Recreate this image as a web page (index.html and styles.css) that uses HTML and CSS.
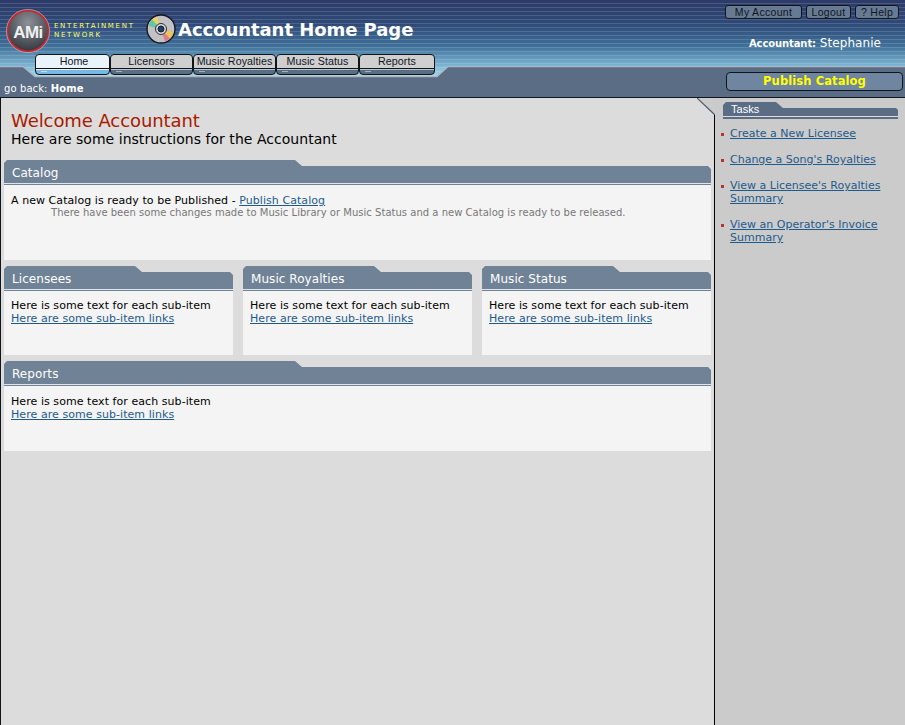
FILE: index.html
```html
<!DOCTYPE html>
<html lang="en">
<head>
    <meta charset="UTF-8">
    <meta name="viewport" content="width=device-width, initial-scale=1.0">
    <title>Accountant Home Page</title>
    <link rel="stylesheet" href="styles.css">
</head>
<body>
    <header class="top">
        <svg class="top-seam" width="905" height="31" viewBox="0 0 905 31">
            <path d="M0 0.5H23L35 10.5H437L448 0.5H905V31H0Z" fill="#5a6d84"/>
            <path d="M0 0.5H23L35 10.5H437L448 0.5H905" fill="none" stroke="#aab6c4" stroke-width="1.5"/>
        </svg>
        <div class="top-row">
            <div class="brand">
                <svg class="logo" width="44" height="44" viewBox="0 0 44 44">
                    <defs>
                        <radialGradient id="ball" cx="0.5" cy="0.3" r="0.75">
                            <stop offset="0" stop-color="#8d9197"/>
                            <stop offset="1" stop-color="#2f3238"/>
                        </radialGradient>
                    </defs>
                    <circle cx="22" cy="22" r="20.5" fill="url(#ball)" stroke="#c8262e" stroke-width="2"/>
                    <circle cx="22" cy="22" r="21.6" fill="none" stroke="#d9e2ea" stroke-width="0.5"/>
                    <text x="22" y="29" class="logo-text" text-anchor="middle">AMi</text>
                </svg>
                <div class="brand-name">ENTERTAINMENT<br>NETWORK</div>
            </div>
            <svg class="disc" width="30" height="30" viewBox="0 0 30 30">
                <circle cx="15" cy="15" r="14" fill="#c2c2c4" stroke="#15181f" stroke-width="1.4"/>
                <path d="M15 15L2.5 12A13 13 0 0 1 11 2.5Z" fill="#e6d36a"/>
                <path d="M15 15L2.5 12A13 13 0 0 1 6 5.5Z" fill="#62c4a8"/>
                <path d="M15 15L27.5 18A13 13 0 0 1 19 27.5Z" fill="#e27a8a"/>
                <path d="M15 15L27.5 18A13 13 0 0 1 24 24.5Z" fill="#e6c75a"/>
                <circle cx="15" cy="15" r="5.5" fill="#d8dade" stroke="#2a2e36" stroke-width="1"/>
                <circle cx="15" cy="15" r="3" fill="#1d3f70" stroke="#15181f" stroke-width="1"/>
            </svg>
            <h1 class="page-title">Accountant Home Page</h1>
            <div class="account">
                <div class="account-links">
                    <a class="mini-btn btn-account" href="#">My Account</a>
                    <a class="mini-btn btn-logout" href="#">Logout</a>
                    <a class="mini-btn btn-help" href="#">? Help</a>
                </div>
                <div class="account-user"><b>Accountant:</b> Stephanie</div>
            </div>
        </div>
        <nav class="tabs">
            <a class="tab tab-on tab-home" href="#">Home</a>
            <a class="tab" href="#">Licensors</a>
            <a class="tab" href="#">Music Royalties</a>
            <a class="tab" href="#">Music Status</a>
            <a class="tab tab-end" href="#">Reports</a>
        </nav>
        <div class="crumbs">
            <div class="go-back">go back: <b>Home</b></div>
            <a class="publish-btn" href="#">Publish Catalog</a>
        </div>
    </header>

    <div class="page">
        <main class="main">
            <h2 class="welcome">Welcome Accountant</h2>
            <p class="intro">Here are some instructions for the Accountant</p>

            <section class="panel">
                <h3 class="panel-head">Catalog</h3>
                <div class="panel-body panel-body-tall">
                    A new Catalog is ready to be Published - <a href="#">Publish Catalog</a>
                    <p class="note">There have been some changes made to Music Library or Music Status and a new Catalog is ready to be released.</p>
                </div>
            </section>

            <div class="panel-row">
                <section class="panel">
                    <h3 class="panel-head panel-head-small">Licensees</h3>
                    <div class="panel-body">Here is some text for each sub-item<br><a href="#">Here are some sub-item links</a></div>
                </section>
                <section class="panel">
                    <h3 class="panel-head panel-head-small">Music Royalties</h3>
                    <div class="panel-body">Here is some text for each sub-item<br><a href="#">Here are some sub-item links</a></div>
                </section>
                <section class="panel">
                    <h3 class="panel-head panel-head-small">Music Status</h3>
                    <div class="panel-body">Here is some text for each sub-item<br><a href="#">Here are some sub-item links</a></div>
                </section>
            </div>

            <section class="panel">
                <h3 class="panel-head">Reports</h3>
                <div class="panel-body panel-body-wide">Here is some text for each sub-item<br><a href="#">Here are some sub-item links</a></div>
            </section>
        </main>

        <aside class="side">
            <svg class="side-corner" width="18" height="18" viewBox="0 0 18 18">
                <path d="M0 0H18V17Z" fill="#cbcbcb"/>
                <path d="M0 0L17.5 16.5" fill="none" stroke="#4a5a6c" stroke-width="1.2"/>
            </svg>
            <h3 class="tasks-head">Tasks</h3>
            <ul class="tasks">
                <li><a href="#">Create a New Licensee</a></li>
                <li><a href="#">Change a Song's Royalties</a></li>
                <li><a href="#">View a Licensee's Royalties Summary</a></li>
                <li><a href="#">View an Operator's Invoice Summary</a></li>
            </ul>
        </aside>
    </div>
</body>
</html>
```

FILE: styles.css
```css
html, body {
    height: 100%;
}
body {
    margin: 0;
    font-family: "DejaVu Sans", Verdana, sans-serif;
    font-size: 11px;
    letter-spacing: 0.06px;
    color: #000;
    display: flex;
    flex-direction: column;
    overflow: hidden;
}
a {
    color: #1f5a8c;
}

/* header */
.top {
    position: relative;
    height: 97px;
    flex: none;
    border-bottom: 1px solid #10151c;
    background:
        repeating-linear-gradient(to bottom, rgba(0, 0, 0, 0) 0 3px, rgba(255, 255, 255, 0.14) 3px 4px),
        linear-gradient(to bottom, #2c3a68 0, #2f4a78 24px, #3f7099 46px, #7fb6d4 66px, #a8dbe2 77px);
}
.top-seam {
    position: absolute;
    left: 0;
    top: 66px;
}
.top-row {
    position: relative;
    height: 54px;
    display: flex;
    align-items: flex-start;
}
.brand {
    display: flex;
    align-items: center;
    padding: 9px 0 0 6px;
}
.logo {
    overflow: visible;
}
.logo-text {
    font-family: "Liberation Sans Narrow", "Liberation Sans", Arial, sans-serif;
    font-size: 17px;
    font-weight: bold;
    letter-spacing: -0.5px;
    fill: #f0f0f0;
}
.brand-name {
    margin: 0 0 0 4px;
    width: 92px;
    font-size: 7px;
    line-height: 9px;
    letter-spacing: 1.7px;
    color: #ffff66;
}
.disc {
    margin: 14px 0 0 0;
}
.page-title {
    margin: 17px 0 0 2px;
    font-size: 18px;
    line-height: 26px;
    font-weight: bold;
    letter-spacing: -0.05px;
    color: #fff;
}
.account {
    margin-left: auto;
    width: 180px;
    padding: 5px 6px 0 0;
}
.account-links {
    display: flex;
    justify-content: flex-end;
    gap: 4px;
}
.mini-btn {
    box-sizing: border-box;
    height: 14px;
    border: 1px solid #10151c;
    border-radius: 3px;
    background: #667a94;
    color: #10151c;
    font-family: "Liberation Sans", Arial, sans-serif;
    font-size: 10.5px;
    line-height: 12px;
    letter-spacing: 0.3px;
    text-align: center;
    text-decoration: none;
}
.btn-account { width: 77px; }
.btn-logout { width: 45px; }
.btn-help { width: 44px; }
.account-user {
    margin: 17px 18px 0 0;
    text-align: right;
    color: #fff;
    font-size: 12px;
    line-height: 14px;
}
.account-user b {
    font-size: 10px;
    letter-spacing: -0.1px;
}

/* tabs */
.tabs {
    position: relative;
    height: 21px;
    margin-left: 35px;
    display: flex;
}
.tab {
    box-sizing: border-box;
    width: 83px;
    height: 21px;
    border: 1px solid #10151c;
    border-radius: 4px;
    background:
        linear-gradient(#9fb0c2, #9fb0c2) 5px 16px / 6px 1px no-repeat,
        linear-gradient(to bottom, #cfcfcf 0 13px, #10151c 13px 14px, #b8c4d0 14px 15px, #5a6d84 15px);
    color: #10151c;
    font-family: "Liberation Sans", Arial, sans-serif;
    font-size: 10.7px;
    line-height: 13px;
    text-align: center;
    text-decoration: none;
}
.tab-on {
    background:
        linear-gradient(#bfe0f4, #bfe0f4) 5px 16px / 6px 1px no-repeat,
        linear-gradient(to bottom, #eaf3fa 0 13px, #10151c 13px 14px, #eaf3fa 14px 15px, #78b8e4 15px);
}
.tab-home {
    width: 75px;
    padding-left: 3px;
}
.tab-end { width: 76px; }

.crumbs {
    position: relative;
    height: 22px;
    display: flex;
    justify-content: space-between;
    align-items: flex-start;
}
.go-back {
    padding: 7px 0 0 4px;
    color: #fff;
    font-size: 10px;
    letter-spacing: 0.1px;
    line-height: 13px;
}
.publish-btn {
    box-sizing: border-box;
    width: 177px;
    height: 19px;
    margin: -3px 2px 0 0;
    border: 1px solid #10151c;
    border-radius: 4px;
    background: #7085a0;
    color: #ffff00;
    font-size: 11.5px;
    font-weight: bold;
    line-height: 17px;
    letter-spacing: 0.1px;
    text-align: center;
    text-decoration: none;
}

/* page */
.page {
    flex: 1;
    display: flex;
    min-height: 0;
    border-left: 1px solid #10151c;
}
.main {
    box-sizing: border-box;
    width: 714px;
    padding: 12px 3px 0 3px;
    flex: none;
    background: #dcdcdc;
    border-right: 1px solid #000;
}
.welcome {
    margin: 0 0 0 7px;
    font-size: 18px;
    line-height: 21px;
    font-weight: normal;
    letter-spacing: -0.08px;
    color: #a81a00;
}
.intro {
    margin: 0 0 12px 7px;
    font-size: 14px;
    line-height: 17px;
    letter-spacing: 0.03px;
}
.panel {
    margin-bottom: 6px;
}
.panel-head {
    box-sizing: border-box;
    margin: 0;
    height: 26px;
    padding: 6px 0 0 8px;
    font-size: 12px;
    line-height: 15px;
    font-weight: normal;
    color: #fff;
    background: linear-gradient(to bottom, #6f8296 0 23px, #dfe5ea 23px 24px, #6f8296 24px 25px, #f4f4f4 25px);
    clip-path: polygon(0 3px, 3px 0, 291px 0, 298px 6px, calc(100% - 3px) 6px, 100% 9px, 100% 100%, 0 100%);
}
.panel-head-small {
    clip-path: polygon(0 3px, 3px 0, 131px 0, 138px 6px, calc(100% - 3px) 6px, 100% 9px, 100% 100%, 0 100%);
}
.panel-body {
    height: 63px;
    padding: 7px 7px 0 7px;
    box-sizing: border-box;
    background: #f4f4f4;
    line-height: 13px;
}
.panel-body-tall {
    height: 74px;
    padding-top: 8px;
}
.panel-body-wide {
    height: 64px;
    padding-top: 8px;
}
.note {
    margin: -1px 0 0 40px;
    font-size: 10px;
    letter-spacing: 0.02px;
    color: #777;
}
.panel-row {
    display: grid;
    grid-template-columns: repeat(3, 229px);
    column-gap: 10px;
}

/* sidebar */
.side {
    position: relative;
    flex: 1;
    background: #cbcbcb;
    padding: 4px 7px 0 8px;
}
.side-corner {
    position: absolute;
    left: -18px;
    top: 0;
}
.tasks-head {
    box-sizing: border-box;
    margin: 0;
    height: 17px;
    padding: 1px 0 0 8px;
    font-family: "Liberation Sans", Arial, sans-serif;
    font-size: 11px;
    line-height: 13px;
    font-weight: normal;
    color: #fff;
    background: linear-gradient(to bottom, #5a6d84 0 14px, #dcdcdc 14px 15px, #5a6d84 15px);
    clip-path: polygon(0 3px, 3px 0, 53px 0, 60px 6px, calc(100% - 2px) 6px, 100% 8px, 100% 100%, 0 100%);
}
.tasks {
    margin: 8px 0 0 0;
    padding: 0 0 0 7px;
    list-style: none;
    letter-spacing: 0;
}
.tasks li {
    position: relative;
    margin-bottom: 13px;
    line-height: 13px;
}
.tasks li::before {
    content: "";
    position: absolute;
    left: -9px;
    top: 6px;
    width: 3px;
    height: 3px;
    background: #b83232;
}
```
